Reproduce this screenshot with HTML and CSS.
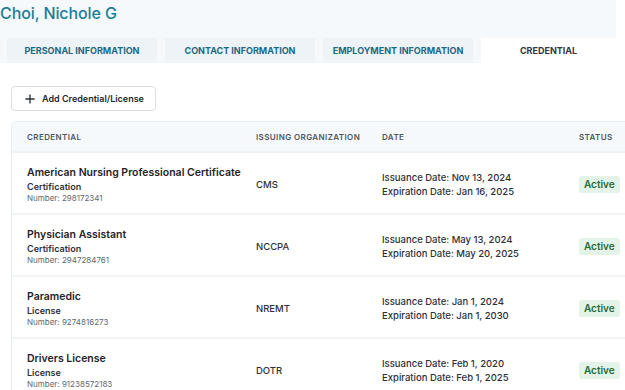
FILE: index.html
```html
<!DOCTYPE html>
<html>
<head>
	<meta name="viewport" content="width=device-width initial-scale=1">
	<title>Choi, Nichole G - Credential</title>
	<link rel="stylesheet" href="styles.css">
</head>
<body>
<div class="page">
	<div class="header">
		<h1 class="name">Choi, Nichole G</h1>
		<div class="tabs">
			<a class="tab">Personal Information</a>
			<a class="tab">Contact Information</a>
			<a class="tab">Employment Information</a>
			<a class="tab active">Credential</a>
		</div>
	</div>
	<div class="content">
		<button class="addbtn">
			<svg width="10" height="10" viewBox="0 0 12 12"><path d="M6 0.5v11M0.5 6h11" stroke="#2b2f36" stroke-width="1.6" fill="none"/></svg>
			Add Credential/License
		</button>
		<table class="creds">
			<thead>
				<tr>
					<th class="c1">Credential</th>
					<th class="c2">Issuing Organization</th>
					<th class="c3">Date</th>
					<th class="c4">Status</th>
				</tr>
			</thead>
			<tbody>
				<tr>
					<td>
						<div class="title">American Nursing Professional Certificate</div>
						<div class="kind">Certification</div>
						<div class="num">Number: 298172341</div>
					</td>
					<td>CMS</td>
					<td>Issuance Date: Nov 13, 2024<br>Expiration Date: Jan 16, 2025</td>
					<td><span class="badge">Active</span></td>
				</tr>
				<tr>
					<td>
						<div class="title">Physician Assistant</div>
						<div class="kind">Certification</div>
						<div class="num">Number: 2947284761</div>
					</td>
					<td>NCCPA</td>
					<td>Issuance Date: May 13, 2024<br>Expiration Date: May 20, 2025</td>
					<td><span class="badge">Active</span></td>
				</tr>
				<tr>
					<td>
						<div class="title">Paramedic</div>
						<div class="kind">License</div>
						<div class="num">Number: 9274816273</div>
					</td>
					<td>NREMT</td>
					<td>Issuance Date: Jan 1, 2024<br>Expiration Date: Jan 1, 2030</td>
					<td><span class="badge">Active</span></td>
				</tr>
				<tr>
					<td>
						<div class="title">Drivers License</div>
						<div class="kind">License</div>
						<div class="num">Number: 91238572183</div>
					</td>
					<td>DOTR</td>
					<td>Issuance Date: Feb 1, 2020<br>Expiration Date: Feb 1, 2025</td>
					<td><span class="badge">Active</span></td>
				</tr>
			</tbody>
		</table>
	</div>
</div>
</body>
</html>
```

FILE: styles.css
```css
html, body{
	margin: 0;
	padding: 0;
	background: #fff;
	overflow: hidden;
}
*{
	font-family: Inter, 'Noto Sans', sans-serif;
	box-sizing: border-box;
}
.page{
	width: 700px;
}
.header{
	width: 616px;
	background: #f5f9fc;
	padding-top: 2px;
}
.name{
	margin: 0;
	font-size: 16px;
	font-weight: 500;
	line-height: 22px;
	color: #1a7d98;
	letter-spacing: -0.1px;
}
.tabs{
	display: flex;
	gap: 8px;
	padding-left: 7px;
	margin-top: 14px;
}
.tab{
	display: flex;
	align-items: center;
	justify-content: center;
	width: 150px;
	height: 25px;
	background: #eef3f7;
	font-size: 9px;
	font-weight: 700;
	text-transform: uppercase;
	color: #1b6983;
}
.tab.active{
	flex: 1;
	background: #fff;
	color: #313844;
}
.content{
	padding: 23px 0 0 11px;
}
.addbtn{
	display: flex;
	align-items: center;
	gap: 7px;
	height: 25px;
	padding: 0 11px 0 13px;
	background: #fff;
	border: 1px solid #dcdfe3;
	border-radius: 4px;
	font-size: 9px;
	font-weight: 600;
	color: #24282e;
}
.creds{
	margin-top: 10px;
	width: 680px;
	border-collapse: separate;
	border-spacing: 0;
	border: 1px solid #e9eef2;
	border-radius: 5px;
	table-layout: fixed;
}
.creds th{
	height: 31px;
	background: #f5f9fc;
	text-align: left;
	font-size: 8px;
	font-weight: 600;
	letter-spacing: 0.4px;
	text-transform: uppercase;
	color: #50565e;
	padding: 0 0 0 15px;
	border-bottom: 2px solid #eef2f5;
}
.creds th.c1{ width: 229px; }
.creds th.c2{ width: 126px; }
.creds th.c3{ width: 197px; }
.creds td{
	height: 62px;
	padding: 3px 0 0 15px;
	vertical-align: middle;
	font-size: 9.5px;
	font-weight: 500;
	line-height: 14px;
	color: #2d3137;
	border-bottom: 2px solid #f2f5f7;
}
.title{
	font-size: 10.5px;
	font-weight: 600;
	line-height: 16px;
	color: #1f2329;
}
.kind{
	font-size: 9px;
	font-weight: 600;
	line-height: 12px;
	color: #2d3137;
}
.num{
	font-size: 8px;
	font-weight: 400;
	line-height: 11px;
	color: #62676e;
}
.badge{
	display: inline-block;
	padding: 2px 5px;
	background: #e4f3e7;
	border-radius: 3px;
	font-size: 10px;
	font-weight: 600;
	line-height: 13px;
	color: #1f6a38;
}
```
